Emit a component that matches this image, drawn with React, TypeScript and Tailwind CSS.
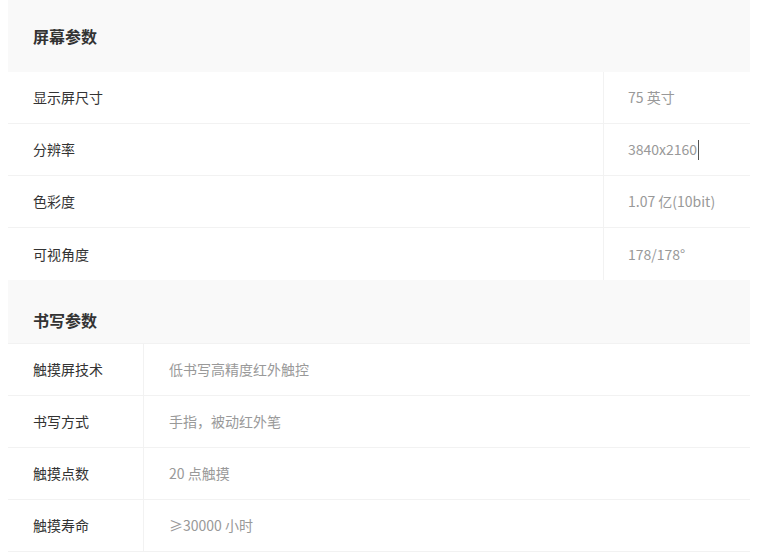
export default function App() {
  const font = { fontFamily: '"Microsoft YaHei","Noto Sans CJK SC","Open Sans",sans-serif' };
  const s1: [string, React.ReactNode][] = [
    ["显示屏尺寸", "75 英寸"],
    ["分辨率", <>3840x2160<span className="inline-block w-px h-[20px] bg-[#555] align-middle ml-[1px]" /></>],
    ["色彩度", "1.07 亿(10bit)"],
    ["可视角度", "178/178°"],
  ];
  const s2 = [
    ["触摸屏技术", "低书写高精度红外触控"],
    ["书写方式", "手指，被动红外笔"],
    ["触摸点数", "20 点触摸"],
    ["触摸寿命", "≥30000 小时"],
  ];
  return (
    <div className="w-[780px] h-[554px] bg-white overflow-hidden pl-[8px] pr-[30px]" style={font}>
      <div className="h-[72px] bg-[#f9f9f9] flex items-center pl-[25px] text-[16px] font-bold text-[#333]">屏幕参数</div>
      {s1.map(([k, v], i) => (
        <div key={i} className={`flex h-[52px] text-[14px] ${i < 3 ? "border-b border-[#f2f2f2]" : ""}`}>
          <div className="w-[596px] border-r border-[#f2f2f2] flex items-center pl-[25px] text-[#333]">{k}</div>
          <div className="flex-1 flex items-center pl-[24px] text-[#999]">{v}</div>
        </div>
      ))}
      <div className="h-[64px] bg-[#f9f9f9] flex items-center pl-[25px] pt-[16px] text-[16px] font-bold text-[#333] border-b border-[#f2f2f2]">书写参数</div>
      {s2.map(([k, v], i) => (
        <div key={i} className="flex h-[52px] text-[14px] border-b border-[#f2f2f2]">
          <div className="w-[136px] border-r border-[#f2f2f2] flex items-center pl-[25px] text-[#333]">{k}</div>
          <div className="flex-1 flex items-center pl-[25px] text-[#999]">{v}</div>
        </div>
      ))}
    </div>
  );
}
